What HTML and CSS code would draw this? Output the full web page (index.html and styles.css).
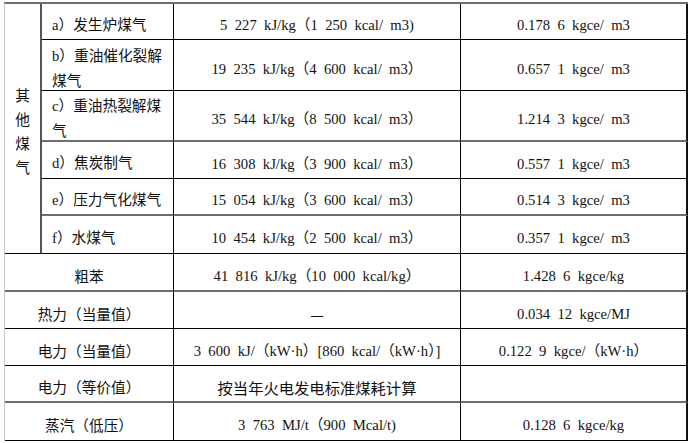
FILE: index.html
```html
<!DOCTYPE html>
<html lang="zh">
<head>
<meta charset="utf-8">
<link rel="stylesheet" href="styles.css">
</head>
<body>
<div class="sheet">
  <div class="cell group"><div class="vert">其他煤气</div></div>
  <div class="cell sub">a）发生炉煤气</div>
  <div class="cell val">5 227 kJ/kg（1 250 kcal/ m3)</div>
  <div class="cell val last">0.178 6 kgce/ m3</div>

  <div class="cell sub">b）重油催化裂解煤气</div>
  <div class="cell val">19 235 kJ/kg（4 600 kcal/ m3）</div>
  <div class="cell val last">0.657 1 kgce/ m3</div>

  <div class="cell sub thick">c）重油热裂解煤气</div>
  <div class="cell val thick">35 544 kJ/kg（8 500 kcal/ m3）</div>
  <div class="cell val last thick">1.214 3 kgce/ m3</div>

  <div class="cell sub">d）焦炭制气</div>
  <div class="cell val">16 308 kJ/kg（3 900 kcal/ m3）</div>
  <div class="cell val last">0.557 1 kgce/ m3</div>

  <div class="cell sub thick">e）压力气化煤气</div>
  <div class="cell val thick">15 054 kJ/kg（3 600 kcal/ m3）</div>
  <div class="cell val last thick">0.514 3 kgce/ m3</div>

  <div class="cell sub">f）水煤气</div>
  <div class="cell val">10 454 kJ/kg（2 500 kcal/ m3）</div>
  <div class="cell val last">0.357 1 kgce/ m3</div>

  <div class="cell name thick">粗苯</div>
  <div class="cell val thick">41 816 kJ/kg（10 000 kcal/kg）</div>
  <div class="cell val last thick">1.428 6 kgce/kg</div>

  <div class="cell name">热力（当量值）</div>
  <div class="cell val cn">—</div>
  <div class="cell val last">0.034 12 kgce/MJ</div>

  <div class="cell name">电力（当量值）</div>
  <div class="cell val">3 600 kJ/（kW·h）[860 kcal/（kW·h）]</div>
  <div class="cell val last">0.122 9 kgce/（kW·h）</div>

  <div class="cell name thick">电力（等价值）</div>
  <div class="cell val cn thick">按当年火电发电标准煤耗计算</div>
  <div class="cell val last thick"></div>

  <div class="cell name">蒸汽（低压）</div>
  <div class="cell val">3 763 MJ/t（900 Mcal/t)</div>
  <div class="cell val last">0.128 6 kgce/kg</div>
</div>
</body>
</html>
```

FILE: styles.css
```css
html, body {
  margin: 0;
  padding: 0;
  background: #ffffff;
}

body {
  font-family: "Liberation Serif", "Noto Sans CJK SC", serif;
  font-size: 14.67px;
  color: #111;
}

.sheet {
  margin: 2px 0 0 4px;
  width: 683px;
  display: grid;
  grid-template-columns: 37px 132px 287px 227px;
  grid-template-rows: 36px 51px 51px 37px 37px 38px 38px 37px 37px 37px 38px;
  border-top: 2px solid #6e6e6e;
  border-left: 1px solid #c8c8c8;
}

.cell {
  box-sizing: border-box;
  border-right: 1px solid #000;
  border-bottom: 1px solid #000;
  display: flex;
  align-items: center;
  line-height: 24px;
  padding-top: 7px;
}

.cell.thick {
  border-bottom: 2px solid #6e6e6e;
}

.cell.last {
  border-right: 2px solid #111;
}

.group {
  grid-row: span 6;
  border-right: 2px solid #555;
  justify-content: center;
  padding-top: 4px;
  font-family: "Noto Sans CJK SC", sans-serif;
}

.vert {
  width: 1em;
  line-height: 24px;
  text-align: center;
}

.sub {
  padding-left: 10px;
  padding-right: 6px;
  line-height: 25px;
}

.name {
  grid-column: span 2;
  justify-content: center;
  font-family: "Noto Sans CJK SC", sans-serif;
}

.val {
  justify-content: center;
  white-space: nowrap;
  word-spacing: 3.67px;
}

.val.cn {
  font-family: "Noto Sans CJK SC", sans-serif;
  font-size: 15.3px;
  word-spacing: 0;
}
```
